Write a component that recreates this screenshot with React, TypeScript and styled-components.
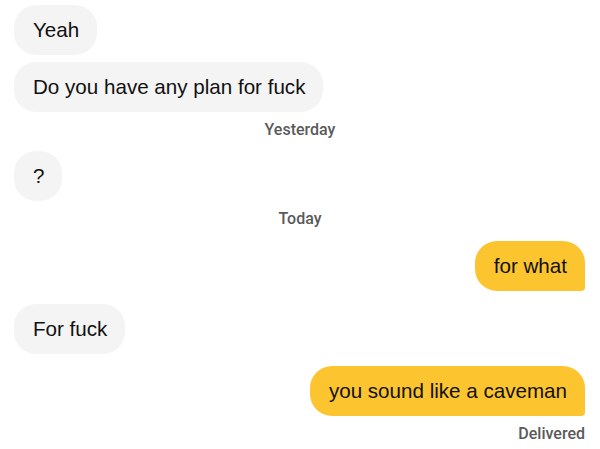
import React from "react";
import styled, { createGlobalStyle } from "styled-components";

type Item =
  | { kind: "msg"; from: "them" | "me"; text: string; gap: number }
  | { kind: "stamp"; text: string; gap: number; align: "center" | "right" };

const items: Item[] = [
  { kind: "msg", from: "them", text: "Yeah", gap: 5 },
  { kind: "msg", from: "them", text: "Do you have any plan for fuck", gap: 7 },
  { kind: "stamp", text: "Yesterday", gap: 8, align: "center" },
  { kind: "msg", from: "them", text: "?", gap: 12 },
  { kind: "stamp", text: "Today", gap: 8, align: "center" },
  { kind: "msg", from: "me", text: "for what", gap: 13 },
  { kind: "msg", from: "them", text: "For fuck", gap: 13 },
  { kind: "msg", from: "me", text: "you sound like a caveman", gap: 12 },
  { kind: "stamp", text: "Delivered", gap: 8, align: "right" },
];

const GlobalStyle = createGlobalStyle`
  html, body {
    margin: 0;
    padding: 0;
    background: #ffffff;
  }
  body {
    font-family: "Liberation Sans", Arial, sans-serif;
    -webkit-font-smoothing: antialiased;
  }
`;

const Thread = styled.div`
  width: 600px;
  height: 449px;
  box-sizing: border-box;
  padding: 0 15px 0 14px;
  display: flex;
  flex-direction: column;
  overflow: hidden;
`;

const Bubble = styled.div<{ $me: boolean; $gap: number }>`
  align-self: ${(p) => (p.$me ? "flex-end" : "flex-start")};
  margin-top: ${(p) => p.$gap}px;
  padding: 13px 18px 13px 19px;
  font-size: 20.6px;
  line-height: 24px;
  color: #111111;
  background: ${(p) => (p.$me ? "#fcc42e" : "#f4f4f4")};
  border-radius: ${(p) => (p.$me ? "22px 22px 4px 22px" : "22px")};
  white-space: nowrap;
`;

const Stamp = styled.div<{ $align: "center" | "right"; $gap: number }>`
  margin-top: ${(p) => p.$gap}px;
  text-align: ${(p) => p.$align};
  padding-left: ${(p) => (p.$align === "center" ? "1px" : "0")};
  font-family: Roboto, "Liberation Sans", sans-serif;
  font-size: 16px;
  line-height: 19px;
  font-weight: 500;
  color: #5a5a5a;
`;

export default function App() {
  return (
    <>
      <GlobalStyle />
      <Thread>
        {items.map((it, i) =>
          it.kind === "msg" ? (
            <Bubble key={i} $me={it.from === "me"} $gap={it.gap}>
              {it.text}
            </Bubble>
          ) : (
            <Stamp key={i} $align={it.align} $gap={it.gap}>
              {it.text}
            </Stamp>
          )
        )}
      </Thread>
    </>
  );
}
